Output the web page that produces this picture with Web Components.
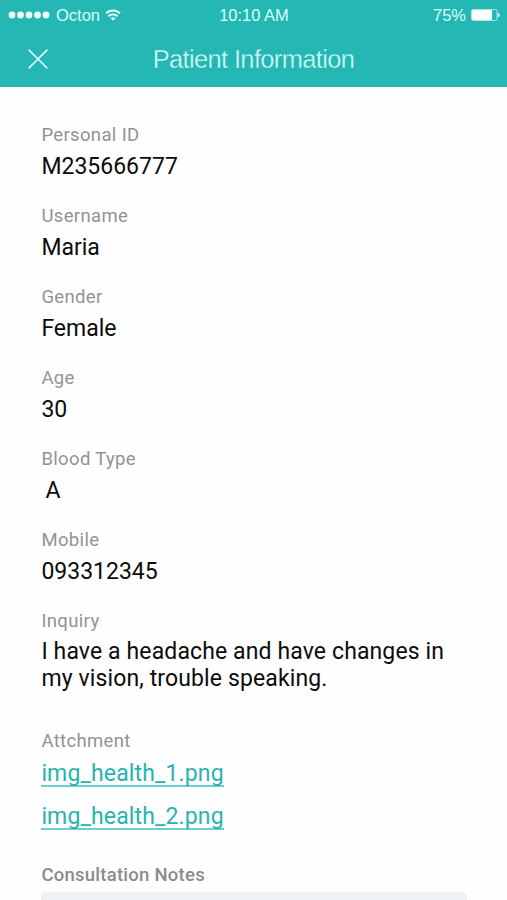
<!DOCTYPE html>
<html lang="en">
<head>
<meta charset="utf-8">
<title>Patient Information</title>
<style>
  html, body {
    margin: 0;
    height: 100%;
    overflow: hidden;
    background: #fefefe;
  }
</style>
</head>
<body>
<patient-screen></patient-screen>

<script>
(function () {
    function makeTemplate(html) {
        let tmpl = document.createElement("template");
        tmpl.innerHTML = html;
        return tmpl;
    }

    function define(name, html) {
        let tmpl = makeTemplate(html);
        customElements.define(name, class extends HTMLElement {
            constructor() {
                super();
                this.attachShadow({ mode: "open" }).appendChild(tmpl.content.cloneNode(true));
            }
        });
    }

    define("status-bar", `
      <style>
          :host {
              display: grid;
              grid-template-columns: 1fr auto 1fr;
              align-items: center;
              height: 30px;
              padding: 0 7px 0 8px;
              font: 16.5px/30px "Liberation Sans", Arial, sans-serif;
              color: #d9fffb;
          }
          .carrier, .power {
              display: flex;
              align-items: center;
          }
          .power {
              justify-content: flex-end;
          }
          svg {
              display: block;
          }
          .name { margin: 0 5px 0 6px; }
          .level { margin-right: 5px; }
      </style>
      <div class="carrier">
        <svg width="42" height="8" viewBox="0 0 42 8" fill="#f2fffe">
          <circle cx="4" cy="4" r="3.4"/><circle cx="12.5" cy="4" r="3.4"/><circle cx="21" cy="4" r="3.4"/><circle cx="29.5" cy="4" r="3.4"/><circle cx="38" cy="4" r="3.4"/>
        </svg>
        <span class="name">Octon</span>
        <svg width="16" height="12" viewBox="0 0 16 12" fill="none" stroke="#e6fffc" stroke-width="1.9">
          <path d="M1 4.400a10 10 0 0 1 14 0"/>
          <path d="M3.500 7.200a6.400 6.400 0 0 1 9 0"/>
          <path d="M5.600 9.300a3.500 3.500 0 0 1 4.800 0L8 11.800z" fill="#e6fffc" stroke="none"/>
        </svg>
      </div>
      <span class="time">10:10 AM</span>
      <div class="power">
        <span class="level">75%</span>
        <svg width="29" height="12" viewBox="0 0 29 12">
          <rect x="0.5" y="0.5" width="25.5" height="11" rx="1.5" fill="none" stroke="#a5e9e4"/>
          <rect x="1" y="1" width="20" height="10" rx="0.8" fill="#fff"/>
          <path d="M26.500 3.500q2.500 1 2.500 2.500t-2.500 2.500z" fill="#c6f5f1"/>
        </svg>
      </div>
    `);

    define("nav-bar", `
      <style>
          :host {
              display: grid;
              grid-template-columns: 76px 1fr 76px;
              align-items: center;
              height: 57px;
              color: #d9fffb;
          }
          svg {
              display: block;
              margin-left: 28px;
          }
          h1 {
              margin: 0;
              padding-top: 1px;
              font: 400 25.5px/56px "Liberation Sans", Arial, sans-serif;
              letter-spacing: -0.65px;
              text-align: center;
              white-space: nowrap;
              /* eats into the glyph edges to get a light weight */
              -webkit-text-stroke: 0.4px #24b7b4;
          }
      </style>
      <svg width="20" height="20" viewBox="0 0 20 20" fill="none" stroke="#d9fffb" stroke-width="1.5">
        <path d="M.6.6l18.800 18.800M19.400.6L.6 19.400"/>
      </svg>
      <h1><slot></slot></h1>
    `);

    define("info-field", `
      <style>
          :host {
              display: flex;
              flex-direction: column;
              gap: 6px;
              margin-bottom: 24px;
          }
          :host([multiline]) {
              gap: 5px;
          }
          .label {
              font-size: 18.5px;
              line-height: 24px;
              letter-spacing: 0.35px;
              color: #939393;
          }
          :host([strong]) .label {
              font-weight: 500;
              letter-spacing: 0.25px;
              color: #8b8b8b;
          }
          .value {
              font-size: 23px;
              line-height: 27px;
              color: #0c0c0c;
          }
      </style>
      <div class="label"><slot name="label"></slot></div>
      <div class="value"><slot></slot></div>
    `);

    define("file-link", `
      <style>
          :host {
              display: block;
              height: 27px;
              margin: 1px 0 16px;
          }
          a {
              display: inline-block;
              height: 25px;
              border-bottom: 2px solid #6bcfca;
              color: #27b4af;
              letter-spacing: 0.14px;
              text-decoration: none;
          }
      </style>
      <a href="#"><slot></slot></a>
    `);

    define("notes-box", `
      <style>
          :host {
              display: block;
              height: 120px;
              border-radius: 5px;
              background: #eff2f4;
          }
      </style>
    `);

    define("patient-screen", `
      <style>
          :host {
              display: flex;
              flex-direction: column;
              height: 900px;
              overflow: hidden;
              font-family: Roboto, "Liberation Sans", sans-serif;
          }
          header {
              flex: none;
              background: #24b7b4;
          }
          main {
              display: flex;
              flex-direction: column;
              padding: 36px 40px 0 41.4px;
          }
          .blood { padding-left: 4px; }
          .inquiry {
              margin-bottom: 37px;
              letter-spacing: 0.12px;
          }
          .files { margin-bottom: 17px; }
      </style>
      <header>
        <status-bar></status-bar>
        <nav-bar>Patient Information</nav-bar>
      </header>
      <main>
        <info-field><span slot="label">Personal ID</span>M235666777</info-field>
        <info-field><span slot="label">Username</span>Maria</info-field>
        <info-field><span slot="label">Gender</span>Female</info-field>
        <info-field><span slot="label">Age</span>30</info-field>
        <info-field><span slot="label">Blood Type</span><span class="blood">A</span></info-field>
        <info-field><span slot="label">Mobile</span>093312345</info-field>
        <info-field class="inquiry" multiline><span slot="label">Inquiry</span>I have a headache and have changes in<br>my vision, trouble speaking.</info-field>
        <info-field class="files"><span slot="label">Attchment</span><file-link>img_health_1.png</file-link><file-link>img_health_2.png</file-link></info-field>
        <info-field strong multiline><span slot="label">Consultation Notes</span><notes-box></notes-box></info-field>
      </main>
    `);
})();
</script>
</body>
</html>
